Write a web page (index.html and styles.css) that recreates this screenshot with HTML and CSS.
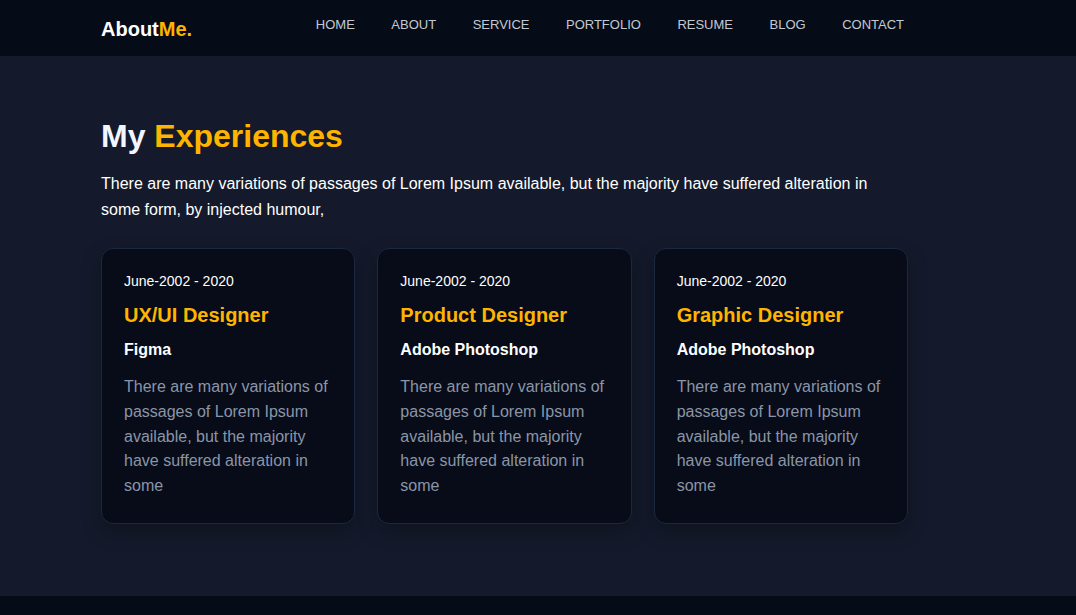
FILE: index.html
```html
<!DOCTYPE html>
<html lang="en">
<head>
<meta charset="utf-8">
<title>AboutMe</title>
<link rel="stylesheet" href="styles.css">
</head>
<body>
<header class="topbar">
  <div class="wrap topbar-inner">
    <a class="logo" href="#">About<span class="accent">Me.</span></a>
    <nav class="menu">
      <a href="#">HOME</a>
      <a href="#">ABOUT</a>
      <a href="#">SERVICE</a>
      <a href="#">PORTFOLIO</a>
      <a href="#">RESUME</a>
      <a href="#">BLOG</a>
      <a href="#">CONTACT</a>
    </nav>
  </div>
</header>
<section class="experiences">
  <div class="wrap">
    <h1 class="title">My <span class="accent">Experiences</span></h1>
    <p class="lead">There are many variations of passages of Lorem Ipsum available, but the majority have suffered alteration in some form, by injected humour,</p>
    <div class="cards">
      <article class="card">
        <div class="date">June-2002 - 2020</div>
        <h3 class="role">UX/UI Designer</h3>
        <div class="tool">Figma</div>
        <p class="desc">There are many variations of passages of Lorem Ipsum available, but the majority have suffered alteration in some</p>
      </article>
      <article class="card">
        <div class="date">June-2002 - 2020</div>
        <h3 class="role">Product Designer</h3>
        <div class="tool">Adobe Photoshop</div>
        <p class="desc">There are many variations of passages of Lorem Ipsum available, but the majority have suffered alteration in some</p>
      </article>
      <article class="card">
        <div class="date">June-2002 - 2020</div>
        <h3 class="role">Graphic Designer</h3>
        <div class="tool">Adobe Photoshop</div>
        <p class="desc">There are many variations of passages of Lorem Ipsum available, but the majority have suffered alteration in some</p>
      </article>
    </div>
  </div>
</section>
<footer class="foot"></footer>
</body>
</html>
```
FILE: styles.css
```css
* { box-sizing: border-box; }
html, body { margin: 0; padding: 0; }
body {
  background: #141a2b;
  font-family: "Liberation Sans", Arial, sans-serif;
  color: #ffffff;
}
a { text-decoration: none; color: inherit; }
.wrap {
  width: 807px;
  margin-left: 101px;
}
.accent { color: #ffb400; }
.topbar {
  background: #060c17;
  height: 56px;
}
.topbar-inner {
  height: 56px;
  display: flex;
  align-items: center;
  justify-content: space-between;
}
.logo {
  font-size: 20px;
  font-weight: 700;
  color: #ffffff;
  padding-top: 2px;
}
.menu {
  display: flex;
  gap: 36.5px;
  margin-right: 4px;
  padding-bottom: 7px;
}
.menu a {
  font-size: 13px;
  color: #c3c9d3;
}
.experiences {
  padding: 60px 0 72px;
}
.title {
  margin: 0;
  font-size: 32px;
  line-height: 40px;
  font-weight: 700;
  color: #f3f5ff;
}
.lead {
  margin: 15px 0 25px;
  font-size: 16px;
  line-height: 26px;
  color: #ffffff;
}
.cards {
  display: grid;
  grid-template-columns: repeat(3, 1fr);
  gap: 22px;
}
.card {
  background: #070c18;
  border: 1px solid #1c2740;
  border-radius: 12px;
  padding: 24px 22px 24px;
  box-shadow: 0 8px 20px rgba(0, 0, 0, 0.25);
}
.date {
  font-size: 14px;
  line-height: 16px;
  color: #ffffff;
}
.role {
  margin: 14px 0 0;
  font-size: 20px;
  line-height: 24px;
  font-weight: 700;
  color: #ffb400;
}
.tool {
  margin-top: 13px;
  font-size: 16px;
  line-height: 20px;
  font-weight: 700;
  color: #ffffff;
}
.desc {
  margin: 15px 0 0;
  font-size: 16px;
  line-height: 24.75px;
  color: #8b95a8;
}
.foot {
  background: #060c17;
  height: 40px;
}
```
